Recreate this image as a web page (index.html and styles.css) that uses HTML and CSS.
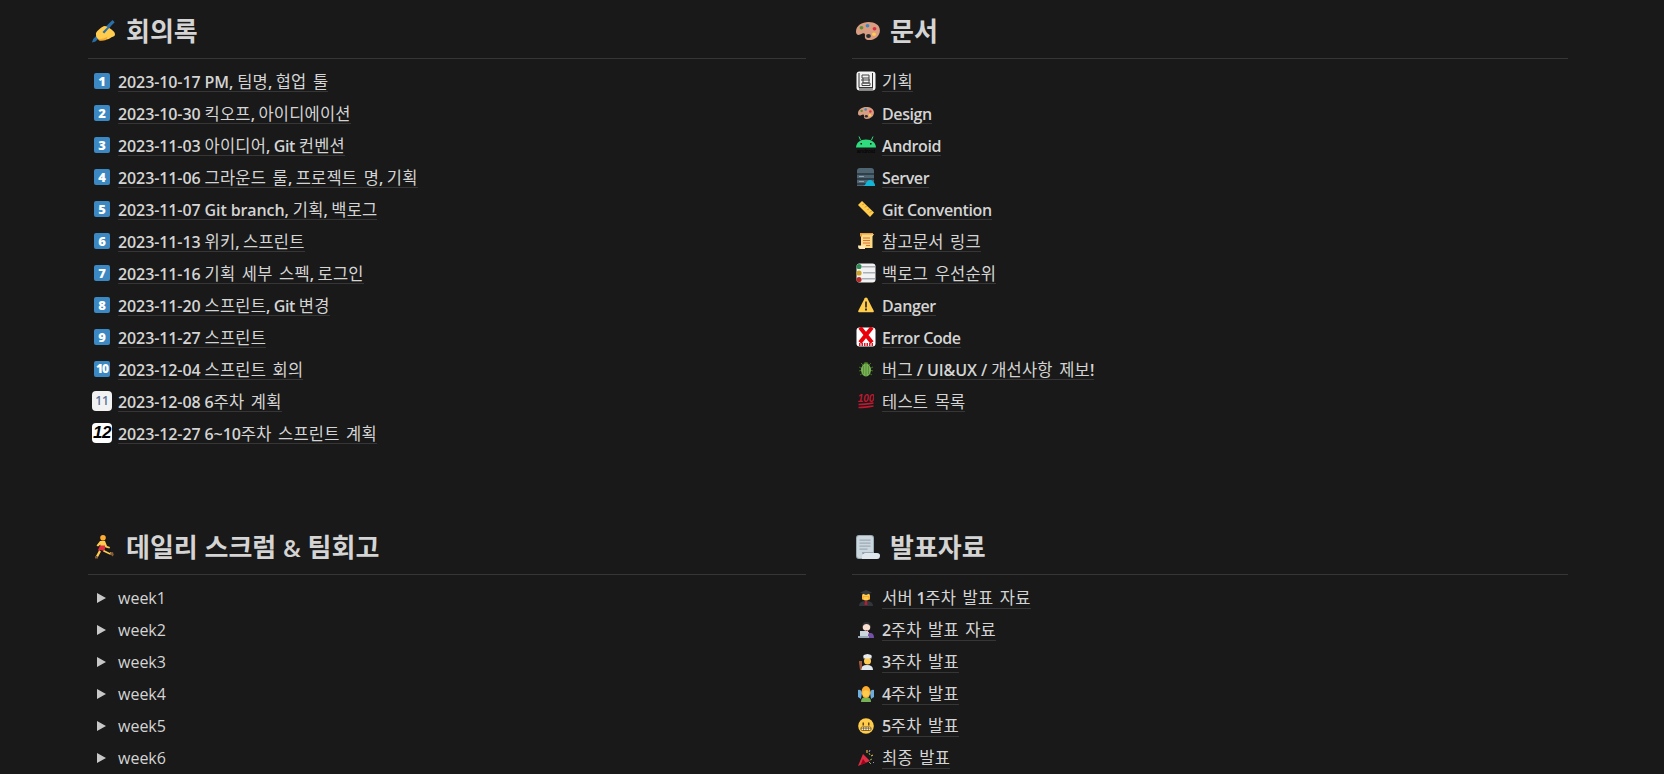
FILE: index.html
```html
<!DOCTYPE html>
<html lang="ko">
<head>
<meta charset="utf-8">
<title>프로젝트 문서</title>
<link rel="stylesheet" href="styles.css">
</head>
<body>
<svg class="defs" aria-hidden="true">
  <symbol id="palette" viewBox="0 0 24 24">
    <path fill="#D99E82" d="M12.500 3C6 3 0 6.800 0 12.500c0 2.200 1 3.400 2.600 3.400 2.400 0 3.200-1.600 5-1.600 1.400 0 1.500 1.300 1.300 2.600-.3 2 .7 4.100 4 4.100 6 0 11-4 11-9.600C23.900 6 18.900 3 12.500 3z"/>
    <ellipse cx="5.500" cy="8.800" rx="1.900" ry="1.800" fill="#5C913B"/>
    <ellipse cx="11.500" cy="6.800" rx="1.900" ry="1.800" fill="#3B88C3"/>
    <ellipse cx="18.500" cy="9.800" rx="1.900" ry="1.800" fill="#DD2E44"/>
    <ellipse cx="18" cy="15.300" rx="1.900" ry="1.800" fill="#FFCC4D"/>
    <ellipse cx="12.500" cy="17" rx="2.400" ry="1.900" fill="#292F33"/>
  </symbol>
</svg>

<main class="board">
  <section class="block">
    <h2 class="head">
      <svg class="hico" viewBox="0 0 24 24"><path fill="#2A6FA8" d="M0 23.500l1.200-3.500L20.500 1l2.200 2.200L3.500 22.500z"/><path fill="#FFCC4D" d="M4 16c-.5-2.500 1-4 3-5.500 2.500-2 4-3.500 6-3.500 2 .5 4 1.500 6.500 3.500 2 1.500 3.500 3 3.500 5 0 1.500-1.500 2-3.500 2.800-1.500 1.200-3 2.200-5 2.200-2 .5-3.500.5-5 .5-1.500.3-2.500.3-3-1-1.500-.5-2.500-2-2.500-4z"/><path fill="#F4A92E" d="M6 20c3.500 0 7-.5 9.500-2.500l-1.500 3.500c-2 .8-5 1.200-7 .5z"/><path fill="#2A6FA8" d="M10.500 13L17.500 6l1.200 1.200-6.500 7.300z"/></svg>
      <span>회의록</span>
    </h2>
    <ul class="rows">
      <li class="row"><span class="slot"><span class="num">1</span></span><a class="link"><b class="d">2023-10-17 PM, </b>팀명<b>, </b>협업 툴</a></li>
      <li class="row"><span class="slot"><span class="num">2</span></span><a class="link"><b class="d">2023-10-30 </b>킥오프<b>, </b>아이디에이션</a></li>
      <li class="row"><span class="slot"><span class="num">3</span></span><a class="link"><b class="d">2023-11-03 </b>아이디어<b>, Git </b>컨벤션</a></li>
      <li class="row"><span class="slot"><span class="num">4</span></span><a class="link"><b class="d">2023-11-06 </b>그라운드 룰<b>, </b>프로젝트 명<b>, </b>기획</a></li>
      <li class="row"><span class="slot"><span class="num">5</span></span><a class="link"><b class="d">2023-11-07 Git branch, </b>기획<b>, </b>백로그</a></li>
      <li class="row"><span class="slot"><span class="num">6</span></span><a class="link"><b class="d">2023-11-13 </b>위키<b>, </b>스프린트</a></li>
      <li class="row"><span class="slot"><span class="num">7</span></span><a class="link"><b class="d">2023-11-16 </b>기획 세부 스펙<b>, </b>로그인</a></li>
      <li class="row"><span class="slot"><span class="num">8</span></span><a class="link"><b class="d">2023-11-20 </b>스프린트<b>, Git </b>변경</a></li>
      <li class="row"><span class="slot"><span class="num">9</span></span><a class="link"><b class="d">2023-11-27 </b>스프린트</a></li>
      <li class="row"><span class="slot"><span class="num ten">10</span></span><a class="link"><b class="d">2023-12-04 </b>스프린트 회의</a></li>
      <li class="row"><span class="slot"><span class="tile eleven">11</span></span><a class="link"><b class="d">2023-12-08 6</b>주차 계획</a></li>
      <li class="row"><span class="slot"><span class="tile twelve">12</span></span><a class="link"><b class="d">2023-12-27 6~10</b>주차 스프린트 계획</a></li>
    </ul>
  </section>

  <section class="block">
    <h2 class="head">
      <svg class="hico"><use href="#palette"/></svg>
      <span>문서</span>
    </h2>
    <ul class="rows">
      <li class="row"><span class="slot">
        <svg class="big" viewBox="0 0 20 20"><rect x=".5" y=".5" width="19" height="19" rx="3" fill="#f4f4f4"/><path fill="none" stroke="#333" d="M3 2v14.500M3 16.500h14M16.500 2v14M3 18h14"/><path fill="none" stroke="#444" d="M6 4h7v3H6zM5 9h9M7 7v5h6V7M6 12h8v2.500H6z"/></svg>
      </span><a class="link">기획</a></li>
      <li class="row"><span class="slot"><svg class="mid"><use href="#palette"/></svg></span><a class="link"><b>Design</b></a></li>
      <li class="row"><span class="slot">
        <svg class="big" viewBox="0 0 20 20"><path fill="#2FDD7E" d="M0 12.500C.3 7.500 4 4.500 10 4.500s9.700 3 10 8z"/><path stroke="#2FDD7E" d="M4.500 5L3 1.500M15.500 5L17 1.500"/><rect x="4.500" y="8" width="1.500" height="1.500" fill="#111"/><rect x="14" y="8" width="1.500" height="1.500" fill="#111"/><text x="10" y="18" class="tiny">android</text></svg>
      </span><a class="link"><b>Android</b></a></li>
      <li class="row"><span class="slot">
        <svg class="big" viewBox="0 0 20 20"><path fill="#4F6672" d="M1 4q0-3 3-3h11q3 0 3 3v15H1z"/><path fill="#2E3F49" d="M1 6h17v2H1zM1 11h17v2H1zM1 16h9v2H1z"/><path fill="#8FA3AD" d="M3 9h5v1H3zM3 14h5v1H3z"/><path fill="#12B5D6" d="M7 19l2-1c1-3 3-5 5-5 2.500 0 3 2 4 3 1 .5 1 2 1 3z"/></svg>
      </span><a class="link"><b>Server</b></a></li>
      <li class="row"><span class="slot">
        <svg class="mid" viewBox="0 0 16 16"><path fill="#FFCC4D" d="M4 0l12 11.500-4 4.500L0 4z"/><path stroke="#C98A1E" d="M4.500 4l1.500-1.500M7 6.500l1.500-1.500M9.500 9l1.500-1.500M12 11.500l1.500-1.500"/></svg>
      </span><a class="link"><b>Git Convention</b></a></li>
      <li class="row"><span class="slot">
        <svg class="mid" viewBox="0 0 16 16"><path fill="#FFD983" d="M3 1h13l-1.500 2.500V15H3z"/><path fill="#FFE8B6" d="M0 12.500h7V16H2q-2 0-2-3.500z"/><path fill="#E9A23B" d="M2 0h13v1.500H4v2H2z"/><path stroke="#D8713A" d="M5 5h7M5 7.500h7M5 10h7M8 12.500h4"/></svg>
      </span><a class="link">참고문서 링크</a></li>
      <li class="row"><span class="slot">
        <svg class="big" viewBox="0 0 20 20"><rect width="19" height="19" y=".5" x=".5" rx="3" fill="#f2f2f2"/><path fill="#A9AFB5" d="M6 3h13v1.500H6zM7 9h12v1.500H7zM6 15h13v1.500H6z"/><circle cx="3" cy="3.500" r="2.600" fill="#2E8B57"/><circle cx="3" cy="10" r="2.600" fill="#C9A227"/><circle cx="3" cy="16.500" r="2.600" fill="#B22A2A"/></svg>
      </span><a class="link">백로그 우선순위</a></li>
      <li class="row"><span class="slot">
        <svg class="mid" viewBox="0 0 16 16"><path fill="#FFCC4D" d="M8 .5c.6 0 1 .3 1.300.8l6.400 12.400c.4.800-.1 1.600-1 1.600H1.300c-.9 0-1.400-.8-1-1.600L6.700 1.300C7 .8 7.400.5 8 .5z"/><path fill="#231F20" d="M7.200 4.500h1.600v6H7.200zM7.100 11.500h1.800v2H7.100z"/></svg>
      </span><a class="link"><b>Danger</b></a></li>
      <li class="row"><span class="slot">
        <svg class="big" viewBox="0 0 20 20"><rect x=".5" y=".5" width="19" height="19" rx="3" fill="#fff"/><path stroke="#E8000B" stroke-width="4" d="M4 .5l12 15M16 .5L4 15.500"/><path stroke="#D61A2B" stroke-width="3" stroke-dasharray="1.500 1" d="M3 17.500h14"/></svg>
      </span><a class="link"><b>Error Code</b></a></li>
      <li class="row"><span class="slot">
        <svg class="mid" viewBox="0 0 16 16"><path stroke="#3E721D" d="M3 2l2 2M13 2l-2 2M1 6l3 1.500M15 6l-3 1.500M1 10l3-1M15 10l-3-1M2 14l3-2M14 14l-3-2"/><ellipse cx="8" cy="3" rx="2.500" ry="2" fill="#3E721D"/><ellipse cx="8" cy="9" rx="5" ry="6.500" fill="#77B255"/><path stroke="#5C913B" d="M8 3v12M5.500 5v8M10.500 5v8"/></svg>
      </span><a class="link">버그<b class="d"> / UI&amp;UX / </b>개선사항 제보<b>!</b></a></li>
      <li class="row"><span class="slot">
        <svg class="mid" viewBox="0 0 16 16"><text x="8" y="8.500" class="hundred">100</text><path fill="none" stroke="#BE1931" stroke-width="1.300" d="M.5 11.500c5 0 9-.5 15-1.500M.5 14.500c5 0 9-.5 15-1.500"/></svg>
      </span><a class="link">테스트 목록</a></li>
    </ul>
  </section>

  <section class="block">
    <h2 class="head low">
      <svg class="hico" viewBox="0 0 24 24"><circle cx="11" cy="2.800" r="2.800" fill="#FFAC33"/><path fill="#FFCC4D" d="M8 6h5l2 5 3 1-.5 1.500-4-1-1-1.500-.5 3-4-.5.5-4-2.500 2-1.500-1z"/><path fill="#DD2E44" d="M8 10.500h5v3.500l-1 2-3.500-1-1 1.500-1.500-1.500z"/><path fill="#FFCC4D" d="M7 15.500l2 1-3 5.500-2-1zM12 15l6 3 .5-1 1 .5-.5 2-1.500 0-6.500-3z"/><path fill="#8A5A3C" d="M3 21l3 1v1.500H3zM18 18l3-1 .8 3-1.500 1.500z"/></svg>
      <span>데일리 스크럼 <b>&amp;</b> 팀회고</span>
    </h2>
    <ul class="rows lower">
      <li class="row"><span class="slot"><i class="arrow"></i></span><span class="plain">week1</span></li>
      <li class="row"><span class="slot"><i class="arrow"></i></span><span class="plain">week2</span></li>
      <li class="row"><span class="slot"><i class="arrow"></i></span><span class="plain">week3</span></li>
      <li class="row"><span class="slot"><i class="arrow"></i></span><span class="plain">week4</span></li>
      <li class="row"><span class="slot"><i class="arrow"></i></span><span class="plain">week5</span></li>
      <li class="row"><span class="slot"><i class="arrow"></i></span><span class="plain">week6</span></li>
    </ul>
  </section>

  <section class="block">
    <h2 class="head low">
      <svg class="hico" viewBox="0 0 24 24"><path fill="#99AAB5" d="M3 0h12q3 0 3 3v15H7v6H3q-3 0-3-3V3q0-3 3-3z"/><path fill="#CCD6DD" d="M1 3q0-2 2-2h12q2 0 2 2v14H6v6H3q-2 0-2-2z"/><path fill="#99AAB5" d="M3.500 4.500h11v1.200h-11zM3.500 7.500h11v1.200h-11zM3.500 10.500h11v1.200h-11zM3.500 13.500h8v1.200h-8z"/><path fill="#E1E8ED" d="M6 24h15q3 0 3-3.500 0-2.500-3-2.500H9q-3 0-3 3z"/></svg>
      <span>발표자료</span>
    </h2>
    <ul class="rows lower">
      <li class="row"><span class="slot">
        <svg class="mid" viewBox="0 0 16 16"><path fill="#31373D" d="M1 16q0-5 7-5t7 5z"/><path fill="#BB1A34" d="M7 11h2l.5 4h-3z"/><circle cx="8" cy="6.500" r="4" fill="#FFCC4D"/><path fill="#FFAC33" d="M4 7l1-1h6l1 1v2l-1 1-1-3H6l-1 3-1-1z"/><path fill="#31373D" d="M8 0l6 2.500L8 5 2 2.500z"/></svg>
      </span><a class="link">서버<b> 1</b>주차 발표 자료</a></li>
      <li class="row"><span class="slot">
        <svg class="mid" viewBox="0 0 16 16"><path fill="#7450A8" d="M6 11h7q3 .5 3 5H6z"/><circle cx="8.500" cy="5" r="3.800" fill="#F7DECE"/><path fill="#292F33" d="M4.500 5q-.5-5 4-5 4.500 0 4 5-1-3-4-3t-4 3z"/><path fill="#DD2E44" d="M8 8h1v1H8z"/><path fill="#F7DECE" d="M6 10h5l-1 3H7z"/><path fill="#CCD6DD" d="M2 9h8v6H2z"/><path fill="#99AAB5" d="M0 14h11v2H0z"/></svg>
      </span><a class="link"><b>2</b>주차 발표 자료</a></li>
      <li class="row"><span class="slot">
        <svg class="mid" viewBox="0 0 16 16"><path fill="#E1E8ED" d="M3 16q0-5 6-5t6 5z"/><circle cx="9.500" cy="7" r="3.500" fill="#FFCC4D"/><path fill="#E6EBEF" d="M5.500 3.500q-1-3 2-3 2-1 4 0 3 0 2 3v1h-8z"/><path fill="#A0593A" d="M1 7h3v5l-.8 4H2l-.5-4L1 9z"/></svg>
      </span><a class="link"><b>3</b>주차 발표</a></li>
      <li class="row"><span class="slot">
        <svg class="mid" viewBox="0 0 16 16"><path fill="#6DAEE0" d="M0 4q3-1 4 3l-1 6-3-2zM16 4q-3-1-4 3l1 6 3-2z"/><path fill="#77B255" d="M3 16q0-5 5-5t5 5z"/><ellipse cx="8" cy="6" rx="4.500" ry="6" fill="#FFAC33"/><circle cx="8" cy="7.500" r="3.300" fill="#FFCC4D"/></svg>
      </span><a class="link"><b>4</b>주차 발표</a></li>
      <li class="row"><span class="slot">
        <svg class="mid" viewBox="0 0 16 16"><circle cx="8" cy="8" r="7.800" fill="#FFCC4D"/><path fill="#664500" d="M4.500 4.500h1.500v3H4.500zM10 4.500h1.500v3H10z"/><rect x="3" y="9" width="10" height="3.500" rx="1.200" fill="#fff" stroke="#664500" stroke-width=".8"/><path stroke="#664500" stroke-width=".6" d="M5.500 9v3.500M8 9v3.500M10.500 9v3.500M3 10.700h10"/></svg>
      </span><a class="link"><b>5</b>주차 발표</a></li>
      <li class="row"><span class="slot">
        <svg class="mid" viewBox="0 0 16 16"><path fill="#DD2E44" d="M0 16L5 4l7 7z"/><path fill="#A0041E" d="M2.500 15L5 9l3 4z"/><path stroke="#77B255" d="M11 3l1 2M14 9l-2 1M13 14l-2-2"/><path stroke="#FFCC4D" d="M9 0v3M15 5l-2 1"/><path stroke="#AA8DD8" d="M12 0l-1 2M15 12l1 1"/></svg>
      </span><a class="link">최종 발표</a></li>
    </ul>
  </section>
</main>
</body>
</html>
```

FILE: styles.css
```css
* { box-sizing: border-box; }

html, body {
  margin: 0;
  height: 774px;
  overflow: hidden;
  background: #191919;
}

body {
  color: #d4d4d4;
  font-family: "Open Sans", "Noto Sans CJK KR", sans-serif;
  font-size: 16px;
}

.defs { width: 0; height: 0; position: absolute; }

.board {
  display: grid;
  grid-template-columns: 718px 716px;
  column-gap: 46px;
  row-gap: 66px;
  padding-left: 88px;
}

.head {
  display: flex;
  align-items: center;
  gap: 10px;
  height: 59px;
  margin: 0;
  padding: 3px 0 0 4px;
  font-size: 26px;
  font-weight: 700;
  line-height: 32px;
  border-bottom: 1px solid rgba(255, 255, 255, .13);
}

.head.low { padding: 4px 0 0 4px; }

.head b { font-size: 24px; font-weight: 600; }

.hico { width: 24px; height: 24px; flex: none; }

.rows {
  list-style: none;
  margin: 0;
  padding: 7px 0 0;
}

.rows.lower { padding-top: 8px; }

.row {
  display: flex;
  height: 32px;
  padding-left: 4px;
}

.slot {
  display: flex;
  align-items: center;
  justify-content: center;
  flex: none;
  width: 20px;
  height: 30px;
  margin-right: 6px;
}

.link {
  display: block;
  height: 21px;
  margin-top: 5px;
  padding-top: 1px;
  font-size: 16.5px;
  line-height: 20px;
  letter-spacing: .2px;
  word-spacing: 2px;
  border-bottom: 1px solid rgba(255, 255, 255, .13);
  white-space: nowrap;
}

.lower .link { padding-top: 0; }

.link b {
  font-size: 16px;
  font-weight: 600;
  letter-spacing: -.4px;
  word-spacing: 0;
}

.link b.d { letter-spacing: -.1px; }

.plain {
  margin-top: 5px;
  line-height: 20px;
}

.num {
  width: 16px;
  height: 16px;
  border-radius: 2px;
  background: #3B88C3;
  color: #fff;
  font-size: 13px;
  font-weight: 800;
  line-height: 16px;
  text-align: center;
}

.num.ten { font-size: 12px; letter-spacing: -1px; }

.tile {
  width: 20px;
  height: 20px;
  border-radius: 4px;
  background: #f2f2f3;
  line-height: 20px;
  text-align: center;
}

.eleven { color: #5c7299; font-size: 12px; font-weight: 600; }

.twelve {
  background: #fff;
  color: #000;
  font-family: "Liberation Sans", sans-serif;
  font-size: 17px;
  font-style: italic;
  font-weight: 700;
  letter-spacing: -.5px;
}

.big { width: 20px; height: 20px; }
.mid { width: 16px; height: 16px; }

.tiny {
  fill: #000;
  font-family: "Liberation Sans", sans-serif;
  font-size: 5.500px;
  text-anchor: middle;
}

.hundred {
  fill: #BE1931;
  font-family: "Liberation Sans", sans-serif;
  font-size: 10px;
  font-style: italic;
  font-weight: 700;
  text-anchor: middle;
}

.arrow {
  width: 0;
  height: 0;
  border-left: 9px solid #c8c8c8;
  border-top: 5px solid transparent;
  border-bottom: 5px solid transparent;
  transform: translateX(-1px);
}
```
